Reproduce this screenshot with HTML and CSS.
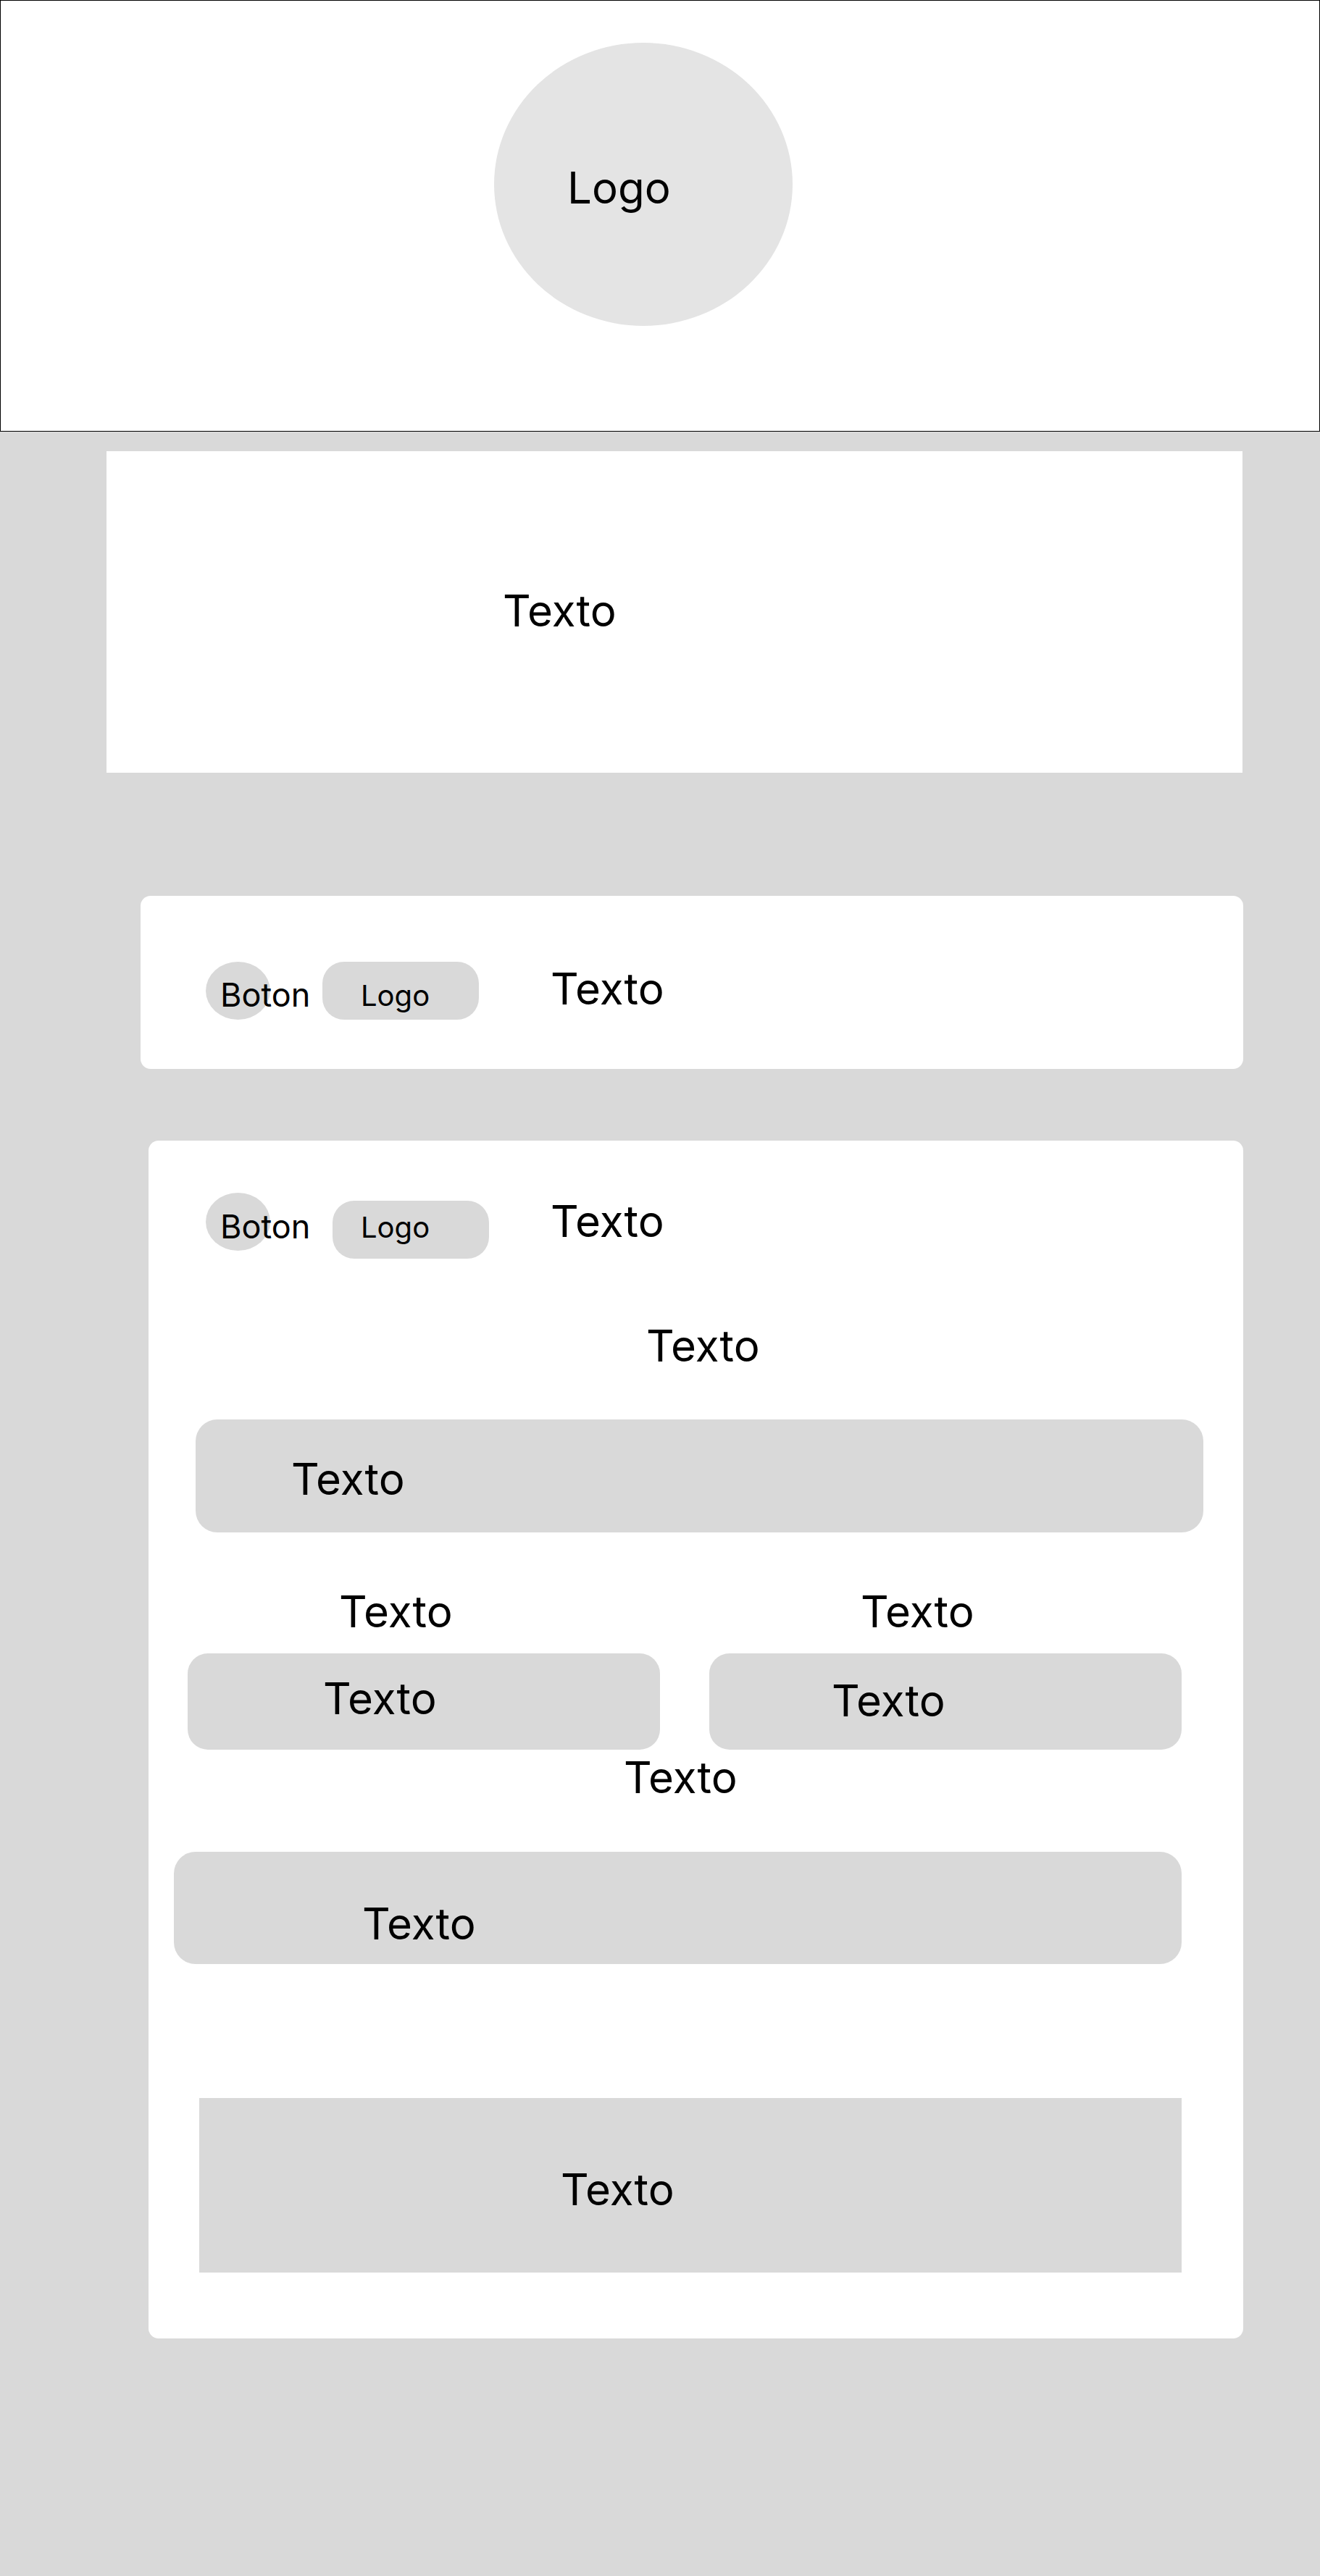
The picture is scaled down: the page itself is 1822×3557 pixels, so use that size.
FILE: index.html
```html
<!DOCTYPE html>
<html lang="es">
<head>
<meta charset="utf-8">
<title>Wireframe</title>
<link rel="stylesheet" href="styles.css">
</head>
<body>
<header class="header">
  <div class="logo-circle"><span class="t60">Logo</span></div>
</header>
<main class="main">
  <section class="card-hero">
    <p class="t60">Texto</p>
  </section>

  <section class="card card-nav">
    <div class="nav-row nav-row--a">
      <div class="btn-round btn-round--a">Boton</div>
      <div class="pill pill--a">Logo</div>
      <p class="t60 nav-text nav-text--a">Texto</p>
    </div>
  </section>

  <section class="card card-main">
    <div class="nav-row nav-row--b">
      <div class="btn-round btn-round--b">Boton</div>
      <div class="pill pill--b">Logo</div>
      <p class="t60 nav-text nav-text--b">Texto</p>
    </div>

    <p class="t60 title">Texto</p>

    <div class="box box-wide1"><span class="t60">Texto</span></div>

    <div class="cols">
      <div class="col">
        <p class="t60 col-label">Texto</p>
        <div class="box col-box col-box--left"><span class="t60">Texto</span></div>
      </div>
      <div class="col">
        <p class="t60 col-label">Texto</p>
        <div class="box col-box col-box--right"><span class="t60">Texto</span></div>
      </div>
    </div>

    <p class="t60 center-label">Texto</p>

    <div class="box box-wide2"><span class="t60">Texto</span></div>

    <div class="rect"><span class="t60">Texto</span></div>
  </section>
</main>
</body>
</html>
```

FILE: styles.css
```css
* {
  box-sizing: border-box;
  margin: 0;
  padding: 0;
}

html,
body {
  background: #d9d9d9;
}

body {
  width: 1822px;
  min-height: 3557px;
  font-family: Inter, "Noto Sans", "Liberation Sans", sans-serif;
  color: #000;
}

.t60 {
  display: block;
  font-size: 60px;
  line-height: 72px;
  font-weight: 400;
  white-space: nowrap;
}

/* Header */
.header {
  height: 596px;
  background: #fff;
  border: 1px solid #000;
  padding: 58px 0 0 681px;
}

.logo-circle {
  width: 412px;
  height: 391px;
  border-radius: 50%;
  background: #e4e4e4;
  padding: 164px 0 0 101px;
}

/* Main column */
.main {
  display: flex;
  flex-direction: column;
  align-items: flex-start;
}

.card-hero {
  margin: 27px 0 0 147px;
  width: 1568px;
  height: 444px;
  background: #fff;
  padding: 184px 0 0 547px;
}

.card {
  background: #fff;
  border-radius: 14px;
}

.card-nav {
  margin: 170px 0 0 194px;
  width: 1522px;
  height: 239px;
}

.card-main {
  margin: 99px 0 0 205px;
  width: 1511px;
  padding-bottom: 91px;
  display: flex;
  flex-direction: column;
  align-items: flex-start;
}

/* Nav row */
.nav-row {
  display: flex;
  align-items: flex-start;
}

.nav-row--a {
  padding-left: 90px;
}

.nav-row--b {
  padding-left: 79px;
}

.btn-round {
  flex: none;
  min-width: 0;
  width: 89px;
  height: 80px;
  border-radius: 50%;
  background: #d9d9d9;
  font-size: 45px;
  line-height: 54px;
  white-space: nowrap;
  padding: 19px 0 0 20px;
}

.btn-round--a {
  margin-top: 91px;
}

.btn-round--b {
  margin-top: 72px;
  padding-top: 20px;
}

.pill {
  flex: none;
  width: 216px;
  height: 80px;
  border-radius: 30px;
  background: #d9d9d9;
  font-size: 40px;
  line-height: 48px;
  white-space: nowrap;
}

.pill--a {
  margin: 91px 0 0 72px;
  padding: 23px 0 0 53px;
}

.pill--b {
  margin: 83px 0 0 86px;
  padding: 13px 0 0 39px;
}

.nav-text--a {
  margin: 92px 0 0 99px;
}

.nav-text--b {
  margin: 75px 0 0 85px;
}

/* Main card content */
.title {
  margin: 84px 0 0 687px;
}

.box {
  background: #d9d9d9;
  border-radius: 30px;
}

.box-wide1 {
  margin: 66px 0 0 65px;
  width: 1391px;
  height: 156px;
  padding: 46px 0 0 132px;
}

.cols {
  display: flex;
  gap: 68px;
  margin: 73px 0 0 54px;
}

.col {
  width: 652px;
  display: flex;
  flex-direction: column;
  align-items: flex-start;
}

.col-label {
  margin-left: 209px;
}

.col-box {
  margin-top: 22px;
  width: 652px;
  height: 133px;
  border-radius: 28px;
}

.col-box--left {
  padding: 26px 0 0 187px;
}

.col-box--right {
  padding: 29px 0 0 169px;
}

.center-label {
  margin: 2px 0 0 656px;
}

.box-wide2 {
  margin: 67px 0 0 35px;
  width: 1391px;
  height: 155px;
  padding: 63px 0 0 260px;
}

.rect {
  margin: 185px 0 0 70px;
  width: 1356px;
  height: 241px;
  background: #d9d9d9;
  padding: 90px 0 0 499px;
}
```
